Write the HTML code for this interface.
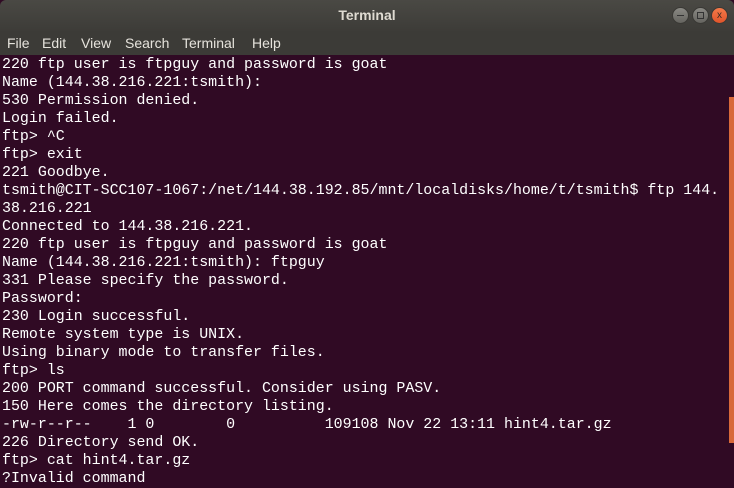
<!DOCTYPE html>
<html><head><meta charset="utf-8"><style>
*{margin:0;padding:0}
html,body{width:734px;height:488px;overflow:hidden;background:#300a24}
.title{position:absolute;left:0;top:0;width:734px;height:31px;background:linear-gradient(#4a4944,#3d3c38);border-radius:6px 6px 0 0;color:#dfdbd2;font:bold 14px "Liberation Sans",sans-serif;text-align:center;line-height:30px}
.menu{position:absolute;left:0;top:31px;width:734px;height:24px;background:#3c3b37;color:#e6e3dc;font:14px "Liberation Sans",sans-serif;line-height:24px}
.menu span{position:absolute;top:0}
.btn{position:absolute;top:7px;width:17px;height:17px;border-radius:50%;background:linear-gradient(#8a8984,#65645f);border:1px solid #3a3935;box-sizing:border-box}
.term{position:absolute;left:2px;top:56px;color:#fff;font:14.95px/18px "Liberation Mono",monospace;white-space:pre}
.sb{position:absolute;left:729px;top:97px;width:5px;height:346px;background:#d8693a}
</style></head><body>
<div class="title">Terminal</div>
<div class="btn" style="left:672px"><div style="position:absolute;left:4px;top:7px;width:7px;height:1px;background:#333"></div></div>
<div class="btn" style="left:692px"><div style="position:absolute;left:4px;top:4px;width:7px;height:7px;border:1px solid #333;box-sizing:border-box"></div></div>
<div class="btn" style="left:711px;background:linear-gradient(#f47a4a,#e0542a);color:#3a2a22;font:10px 'Liberation Sans',sans-serif;text-align:center;line-height:15px">x</div>
<div class="menu"><span style="left:7px">File</span><span style="left:42px">Edit</span><span style="left:81px">View</span><span style="left:125px">Search</span><span style="left:182px">Terminal</span><span style="left:252px">Help</span></div>
<div class="term">220 ftp user is ftpguy and password is goat
Name (144.38.216.221:tsmith):
530 Permission denied.
Login failed.
ftp> ^C
ftp> exit
221 Goodbye.
tsmith@CIT-SCC107-1067:/net/144.38.192.85/mnt/localdisks/home/t/tsmith$ ftp 144.
38.216.221
Connected to 144.38.216.221.
220 ftp user is ftpguy and password is goat
Name (144.38.216.221:tsmith): ftpguy
331 Please specify the password.
Password:
230 Login successful.
Remote system type is UNIX.
Using binary mode to transfer files.
ftp> ls
200 PORT command successful. Consider using PASV.
150 Here comes the directory listing.
-rw-r--r--    1 0        0          109108 Nov 22 13:11 hint4.tar.gz
226 Directory send OK.
ftp> cat hint4.tar.gz
?Invalid command</div>
<div class="sb"></div>
</body></html>
